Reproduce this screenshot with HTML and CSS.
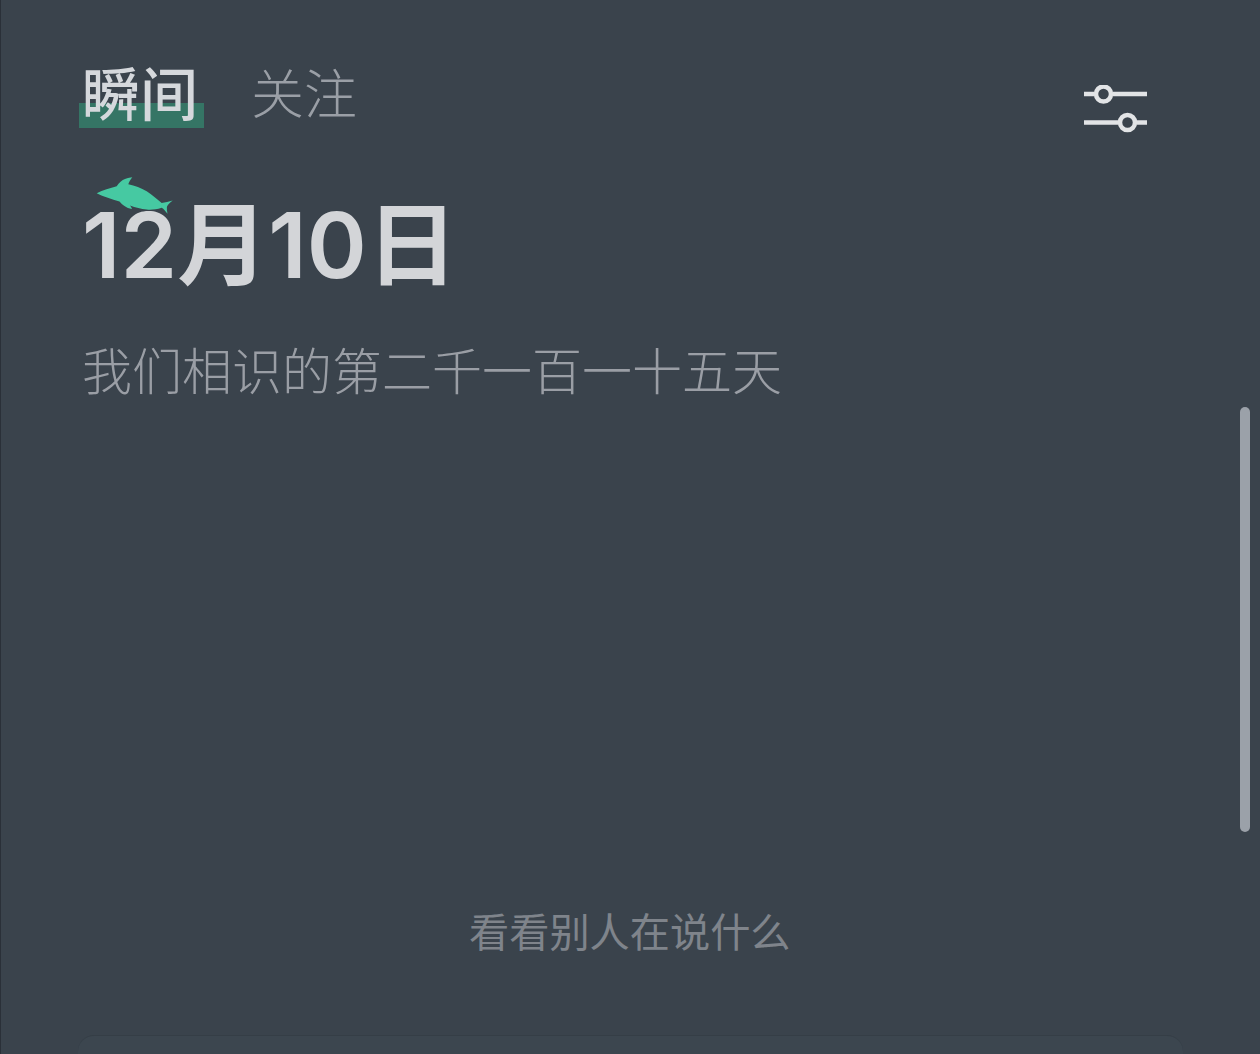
FILE: index.html
```html
<!DOCTYPE html>
<html lang="zh-CN">
<head>
<meta charset="utf-8">
<title>瞬间</title>
<link rel="stylesheet" href="styles.css">
</head>
<body>
<main class="screen">
  <header class="topbar">
    <nav class="tabs">
      <span class="tab tab-active">瞬间</span>
      <span class="tab">关注</span>
    </nav>
    <svg class="filter-icon" viewBox="0 0 64 48" width="64" height="48" aria-hidden="true">
      <path class="filter-line" d="M0 9H10.500M28.500 9H63M0 37.500H34.500M52.500 37.500H63"/>
      <circle class="filter-knob" cx="19.500" cy="9" r="7.500"/>
      <circle class="filter-knob" cx="43.500" cy="37.500" r="7.500"/>
    </svg>
  </header>
  <section class="intro">
    <h1 class="date">12月10日</h1>
    <svg class="dolphin" viewBox="0 0 80 40" width="80" height="40" aria-hidden="true">
      <path d="M1.700 18.300C8 15 15 13 21.700 11.200C24 8 27 5 30 4C33 3 35.500 2.500 37.300 2.300C35.500 4.500 34 7 33.300 9.300C40 10.500 46 13 51.700 16.200C57 19.500 62 24 66.700 28C70 27.500 74 26.500 77.700 25.500C75 27.500 73 29.500 71.900 31.700C71.700 34 72 36.500 72.500 38.800C70.500 36 68.700 34 66.700 32.700C61 34.500 56 35 51.700 34.500C46 34 40.500 32.500 35 30.500C35.800 31.500 36.500 32.500 37 34C34 33.500 31.500 32.500 29.500 31C27.500 30 26 28 24.500 26.500C20.500 25.500 16.500 24.300 12.800 22.700C9 21.500 5 20 1.700 18.300Z"/>
    </svg>
    <p class="subtitle">我们相识的第二千一百一十五天</p>
  </section>
  <p class="hint">看看别人在说什么</p>
  <div class="card"></div>
  <div class="scrollbar"></div>
</main>
</body>
</html>
```
FILE: styles.css
```css
* {
  box-sizing: border-box;
}

html,
body {
  margin: 0;
  height: 100%;
  overflow: hidden;
}

body {
  background-color: #3a434c;
  font-family: "Noto Sans CJK SC", "Liberation Sans", sans-serif;
}

.screen {
  position: relative;
  display: flex;
  flex-direction: column;
  height: 1054px;
  padding: 0 112px 0 81px;
  border-left: 1px solid #2a3038;
  overflow: hidden;
}

.topbar {
  display: flex;
  justify-content: space-between;
  align-items: flex-start;
  padding-top: 57px;
}

.tabs {
  display: flex;
  gap: 53px;
  align-items: flex-end;
}

.tab {
  position: relative;
  z-index: 0;
  font-size: 53px;
  line-height: 68px;
  font-weight: 300;
  color: #9a9fa6;
}

.tab-active {
  font-size: 58px;
  font-weight: 500;
  color: #d5d8dc;
}

.tab-active::after {
  content: "";
  position: absolute;
  z-index: -1;
  left: -3px;
  right: -6px;
  bottom: -3px;
  height: 25px;
  background: #357565;
}

.filter-icon {
  margin-top: 28px;
}

.filter-line {
  fill: none;
  stroke: #e2e4e6;
  stroke-width: 4.500;
}

.filter-knob {
  fill: none;
  stroke: #e2e4e6;
  stroke-width: 4.500;
}

.intro {
  position: relative;
  padding-top: 56px;
}

.date {
  margin: 0;
  font-size: 91px;
  line-height: 112px;
  font-weight: 600;
  font-family: "Inter", "Noto Sans CJK SC", sans-serif;
  color: #d3d5d8;
}

.dolphin {
  position: absolute;
  left: 13px;
  top: 42px;
  fill: #46c9a2;
}

.subtitle {
  margin: 31px 0 0;
  font-size: 50px;
  line-height: 72px;
  font-weight: 300;
  color: #9a9ea5;
  white-space: nowrap;
}

.hint {
  position: absolute;
  left: 468px;
  top: 902px;
  margin: 0;
  font-size: 40.200px;
  line-height: 56px;
  color: #7f848b;
  white-space: nowrap;
}

.card {
  position: absolute;
  left: 77px;
  right: 77px;
  top: 1035px;
  height: 60px;
  background: #3c464f;
  border-radius: 16px;
  border-top: 1px solid #353e46;
}

.scrollbar {
  position: absolute;
  left: 1239px;
  top: 407px;
  width: 10px;
  height: 425px;
  border-radius: 5px;
  background: #9ba1a9;
}
```
